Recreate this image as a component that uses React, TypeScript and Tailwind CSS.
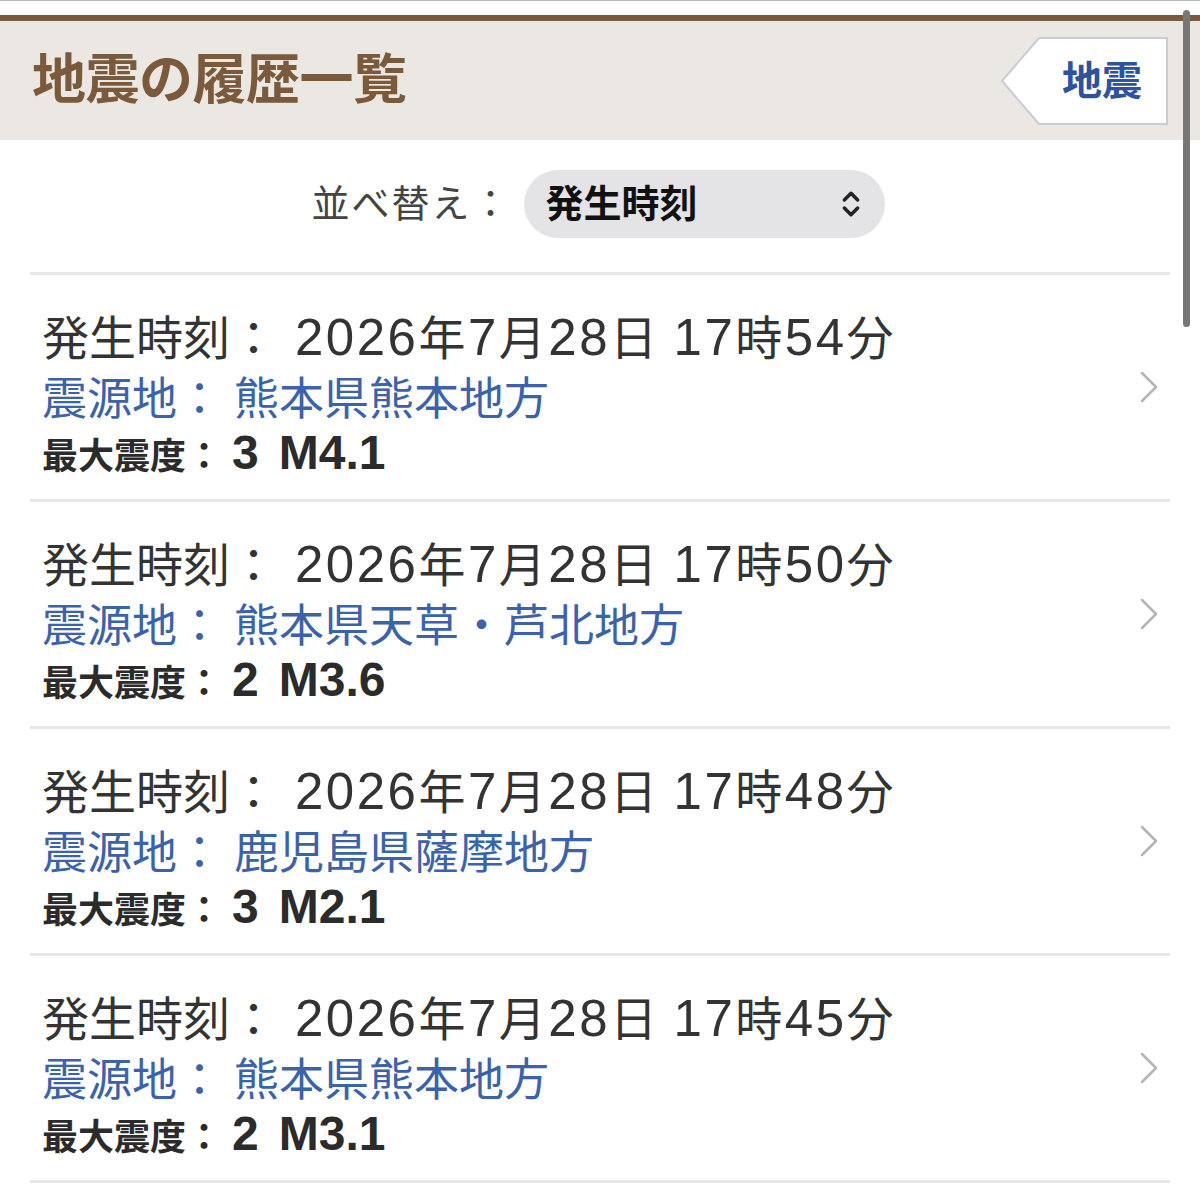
import { ChevronsUpDown } from "lucide-react";

type Quake = {
  id: string;
  date: string;
  clock: string;
  place: string;
  intensity: string;
  magnitude: string;
};

const QUAKES: Quake[] = [
  { id: "q1", date: "2026年7月28日", clock: "17時54分", place: "熊本県熊本地方", intensity: "3", magnitude: "M4.1" },
  { id: "q2", date: "2026年7月28日", clock: "17時50分", place: "熊本県天草・芦北地方", intensity: "2", magnitude: "M3.6" },
  { id: "q3", date: "2026年7月28日", clock: "17時48分", place: "鹿児島県薩摩地方", intensity: "3", magnitude: "M2.1" },
  { id: "q4", date: "2026年7月28日", clock: "17時45分", place: "熊本県熊本地方", intensity: "2", magnitude: "M3.1" },
];

const font = "font-['Liberation_Sans','Noto_Sans_CJK_JP',sans-serif]";

// digits render a bit larger than the kanji, like the iOS font does
function Mixed({ text }: { text: string }) {
  const parts = text.split(/(\d+)/).filter(Boolean);
  return (
    <>
      {parts.map((p, i) =>
        /^\d+$/.test(p) ? (
          <span key={i} className="text-[51px]">
            {p}
          </span>
        ) : (
          <span key={i}>{p}</span>
        )
      )}
    </>
  );
}

const Divider = () => <div className="mx-[30px] h-[3px] bg-[#e7e7e7]" />;

const QuakeRow = ({ quake }: { quake: Quake }) => (
  <div className="flex items-center pl-[42px] pr-[42px] pt-[32px] pb-[24px]">
    <div className="flex-1">
      <p className="h-[62px] text-[47px] leading-[62px] text-[#333] whitespace-nowrap">
        発生時刻：
        <span className="ml-[18px] tracking-[2.5px]">
          <Mixed text={quake.date} />
        </span>
        <span className="ml-[14px] tracking-[2.5px]">
          <Mixed text={quake.clock} />
        </span>
      </p>
      <p className="text-[45px] leading-[62px] text-[#3a62ad] whitespace-nowrap">
        震源地：<span className="ml-[12px]">{quake.place}</span>
      </p>
      <p className="flex items-baseline h-[44px] leading-[44px] font-bold text-[#2b2b2b] whitespace-nowrap">
        <span className="text-[36px]">最大震度：</span>
        <span className="ml-[10px] text-[48px]">{quake.intensity}</span>
        <span className="ml-[20px] text-[48px]">{quake.magnitude}</span>
      </p>
    </div>
    <svg width="18" height="32" viewBox="0 0 18 32" className="shrink-0 mb-[8px]">
      <polyline points="2,2 16,16 2,30" fill="none" stroke="#b4b4b4" strokeWidth="2.5" strokeLinecap="round" strokeLinejoin="round" />
    </svg>
  </div>
);

export default function App() {
  return (
    <div className={"relative w-[1200px] h-[1187px] overflow-hidden bg-white " + font}>
      {/* top strip */}
      <div className="h-[15px] border-t border-[#b9b9bd] bg-white" />
      <div className="h-[6px] bg-[#7b5a3b]" />

      <header className="flex h-[119px] items-center justify-between bg-[#ebe7e2] pl-[32px] pr-[32px]">
        <h1 className="text-[54px] font-bold tracking-[-0.5px] text-[#7b5a3b]">地震の履歴一覧</h1>
        <div className="relative flex h-[88px] w-[168px] items-center justify-end pr-[26px]">
          <svg width="168" height="88" viewBox="0 0 168 88" className="absolute inset-0">
            <polygon points="39,1 167,1 167,87 39,87 2,44" fill="#fff" stroke="#c9ccd6" strokeWidth="2" />
          </svg>
          <span className="relative text-[40px] font-bold text-[#2c52a0]">地震</span>
        </div>
      </header>

      <div className="flex items-center justify-center pt-[30px] pb-[34px] pr-[4px]">
        <span className="text-[38px] tracking-[2px] text-[#444]">並べ替え：</span>
        <div className="ml-[12px] flex h-[68px] w-[361px] items-center justify-between rounded-full bg-[#e4e4e7] pl-[22px] pr-[18px]">
          <span className="text-[38px] font-bold text-[#111]">発生時刻</span>
          <ChevronsUpDown size={32} strokeWidth={2.6} color="#222" />
        </div>
      </div>

      <Divider />
      {QUAKES.map((q) => (
        <div key={q.id}>
          <QuakeRow quake={q} />
          <Divider />
        </div>
      ))}

      {/* scroll indicator */}
      <div className="absolute right-[10px] top-[10px] h-[317px] w-[7px] rounded-full bg-[#777]" />
    </div>
  );
}
